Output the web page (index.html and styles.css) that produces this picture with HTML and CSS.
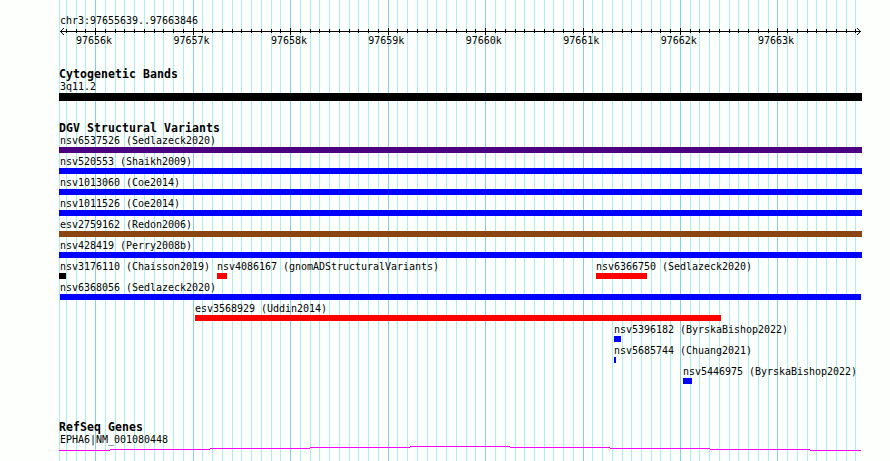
FILE: index.html
```html
<!DOCTYPE html>
<html lang="en">
<head>
    <meta charset="UTF-8">
    <meta name="viewport" content="width=device-width, initial-scale=1.0">
    <title>chr3:97655639..97663846</title>
    <link rel="stylesheet" href="styles.css">
</head>
<body>
    <div class="browser">
        <!-- grid lines: every 100 bp, darker every 1 kb -->
        <svg class="grid" width="890" height="461" shape-rendering="crispEdges">
            <path class="minor" d="M59.5 0v461M66.5 0v461M76.5 0v461M85.5 0v461M105.5 0v461M115.5 0v461M124.5 0v461M134.5 0v461M144.5 0v461M154.5 0v461M163.5 0v461M173.5 0v461M183.5 0v461M202.5 0v461M212.5 0v461M222.5 0v461M232.5 0v461M241.5 0v461M251.5 0v461M261.5 0v461M271.5 0v461M280.5 0v461M300.5 0v461M310.5 0v461M319.5 0v461M329.5 0v461M339.5 0v461M349.5 0v461M358.5 0v461M368.5 0v461M378.5 0v461M397.5 0v461M407.5 0v461M417.5 0v461M427.5 0v461M436.5 0v461M446.5 0v461M456.5 0v461M466.5 0v461M475.5 0v461M495.5 0v461M505.5 0v461M515.5 0v461M524.5 0v461M534.5 0v461M544.5 0v461M553.5 0v461M563.5 0v461M573.5 0v461M592.5 0v461M602.5 0v461M612.5 0v461M622.5 0v461M631.5 0v461M641.5 0v461M651.5 0v461M660.5 0v461M670.5 0v461M690.5 0v461M699.5 0v461M709.5 0v461M719.5 0v461M729.5 0v461M738.5 0v461M748.5 0v461M758.5 0v461M768.5 0v461M787.5 0v461M797.5 0v461M807.5 0v461M816.5 0v461M826.5 0v461M836.5 0v461M846.5 0v461M855.5 0v461"/>
            <path class="major" d="M95.5 0v461M193.5 0v461M290.5 0v461M388.5 0v461M485.5 0v461M583.5 0v461M680.5 0v461M777.5 0v461"/>
        </svg>

        <div class="ruler">
            <div class="label">chr3:97655639..97663846</div>
            <svg class="axis" width="803" height="7" viewBox="59 28 803 7" shape-rendering="crispEdges">
                <path d="M60 31.5H861"/>
                <!-- 100 bp ticks -->
                <path d="M66.5 29v4M76.5 29v4M85.5 29v4M105.5 29v4M115.5 29v4M124.5 29v4M134.5 29v4M144.5 29v4M154.5 29v4M163.5 29v4M173.5 29v4M183.5 29v4M202.5 29v4M212.5 29v4M222.5 29v4M232.5 29v4M241.5 29v4M251.5 29v4M261.5 29v4M271.5 29v4M280.5 29v4M300.5 29v4M310.5 29v4M319.5 29v4M329.5 29v4M339.5 29v4M349.5 29v4M358.5 29v4M368.5 29v4M378.5 29v4M397.5 29v4M407.5 29v4M417.5 29v4M427.5 29v4M436.5 29v4M446.5 29v4M456.5 29v4M466.5 29v4M475.5 29v4M495.5 29v4M505.5 29v4M515.5 29v4M524.5 29v4M534.5 29v4M544.5 29v4M553.5 29v4M563.5 29v4M573.5 29v4M592.5 29v4M602.5 29v4M612.5 29v4M622.5 29v4M631.5 29v4M641.5 29v4M651.5 29v4M660.5 29v4M670.5 29v4M690.5 29v4M699.5 29v4M709.5 29v4M719.5 29v4M729.5 29v4M738.5 29v4M748.5 29v4M758.5 29v4M768.5 29v4M787.5 29v4M797.5 29v4M807.5 29v4M816.5 29v4M826.5 29v4M836.5 29v4M846.5 29v4M855.5 29v4"/>
                <!-- 1 kb ticks -->
                <path d="M95.5 28v7M193.5 28v7M290.5 28v7M388.5 28v7M485.5 28v7M583.5 28v7M680.5 28v7M777.5 28v7"/>
                <!-- arrow heads -->
                <path d="M61 30.5h1M62 29.5h1M63 28.5h1M61 32.5h1M62 33.5h1M63 34.5h1"/>
                <path d="M859 30.5h1M858 29.5h1M857 28.5h1M859 32.5h1M858 33.5h1M857 34.5h1"/>
            </svg>
            <div class="ticks">
                <span>97656k</span>
                <span>97657k</span>
                <span>97658k</span>
                <span>97659k</span>
                <span>97660k</span>
                <span>97661k</span>
                <span>97662k</span>
                <span>97663k</span>
            </div>
        </div>

        <div class="track bands">
            <h2>Cytogenetic Bands</h2>
            <div class="label">3q11.2</div>
            <div class="bar black"></div>
        </div>

        <div class="track variants">
            <h2>DGV Structural Variants</h2>
            <div class="row">
                <div class="feature full"><div class="label">nsv6537526 (Sedlazeck2020)</div><div class="bar indigo"></div></div>
            </div>
            <div class="row">
                <div class="feature full"><div class="label">nsv520553 (Shaikh2009)</div><div class="bar blue"></div></div>
            </div>
            <div class="row">
                <div class="feature full"><div class="label">nsv1013060 (Coe2014)</div><div class="bar blue"></div></div>
            </div>
            <div class="row">
                <div class="feature full"><div class="label">nsv1011526 (Coe2014)</div><div class="bar blue"></div></div>
            </div>
            <div class="row">
                <div class="feature full"><div class="label">esv2759162 (Redon2006)</div><div class="bar brown"></div></div>
            </div>
            <div class="row">
                <div class="feature full"><div class="label">nsv428419 (Perry2008b)</div><div class="bar blue"></div></div>
            </div>
            <div class="row">
                <div class="feature" style="width: 7px"><div class="label">nsv3176110 (Chaisson2019)</div><div class="bar black"></div></div>
                <div class="feature inner" style="margin-left: 151px; width: 10px"><div class="label">nsv4086167 (gnomADStructuralVariants)</div><div class="bar red"></div></div>
                <div class="feature inner" style="margin-left: 369px; width: 51px"><div class="label">nsv6366750 (Sedlazeck2020)</div><div class="bar red"></div></div>
            </div>
            <div class="row">
                <div class="feature inner" style="margin-left: 1px; width: 801px"><div class="label">nsv6368056 (Sedlazeck2020)</div><div class="bar blue"></div></div>
            </div>
            <div class="row">
                <div class="feature inner" style="margin-left: 136px; width: 526px"><div class="label">esv3568929 (Uddin2014)</div><div class="bar red"></div></div>
            </div>
            <div class="row">
                <div class="feature inner" style="margin-left: 555px; width: 7px"><div class="label">nsv5396182 (ByrskaBishop2022)</div><div class="bar blue"></div></div>
            </div>
            <div class="row">
                <div class="feature inner" style="margin-left: 555px; width: 2px"><div class="label">nsv5685744 (Chuang2021)</div><div class="bar blue"></div></div>
            </div>
            <div class="row">
                <div class="feature inner" style="margin-left: 624px; width: 9px"><div class="label">nsv5446975 (ByrskaBishop2022)</div><div class="bar blue"></div></div>
            </div>
        </div>

        <div class="track genes">
            <h2>RefSeq Genes</h2>
            <div class="label">EPHA6|NM_001080448</div>
            <svg class="intron" width="803" height="5" viewBox="59 446 803 5" shape-rendering="crispEdges">
                <path d="M59 450.5h51M110 449.5h100M210 448.5h100M310 447.5h100M410 446.5h100M510 447.5h100M610 448.5h100M710 449.5h100M810 450.5h51"/>
            </svg>
        </div>
    </div>
</body>
</html>
```

FILE: styles.css
```css
body {
    margin: 0;
    background-color: #fdfffc;
}

.browser {
    position: relative;
    box-sizing: border-box;
    width: 890px;
    height: 461px;
    padding: 14px 28px 0 59px;
    overflow: hidden;

    font-family: "DejaVu Sans Mono", monospace;
    font-size: 10px;
    line-height: 14px;
    letter-spacing: -0.02px;
    color: #000;
}

/* grid lies behind all the tracks */
.grid {
    position: absolute;
    top: 0;
    left: 0;
    z-index: -1;
}

.grid .minor {
    stroke: #afeeee;
}

.grid .major {
    stroke: #87ceeb;
}

.label {
    height: 13px;
    padding-left: 1px;
    white-space: nowrap;
}

.ruler {
    height: 53px;
}

.axis {
    display: block;
    margin-top: 1px;
    stroke: #000;
}

/* one column for each kb */
.ticks {
    display: grid;
    grid-template-columns: repeat(8, 97.45px);
    margin-top: -1px;
    padding-left: 17px;
}

.track h2 {
    height: 13px;
    margin: 0;
    font-size: 11.5px;
    line-height: 15px;
    letter-spacing: 0.077px;
    font-weight: bold;
}

.bar {
    height: 6px;
}

.bands {
    height: 54px;
}

.bands .bar {
    height: 8px;
}

.variants {
    height: 299px;
}

.row {
    display: flex;
    height: 21px;
}

.feature.full {
    width: 803px;
}

.inner .label {
    padding-left: 0;
}

.black {
    background-color: #000;
}

.indigo {
    background-color: #4b0082;
}

.blue {
    background-color: #00f;
}

.brown {
    background-color: #8b4513;
}

.red {
    background-color: #f00;
}

.intron {
    display: block;
    stroke: #f0f;
}
```
